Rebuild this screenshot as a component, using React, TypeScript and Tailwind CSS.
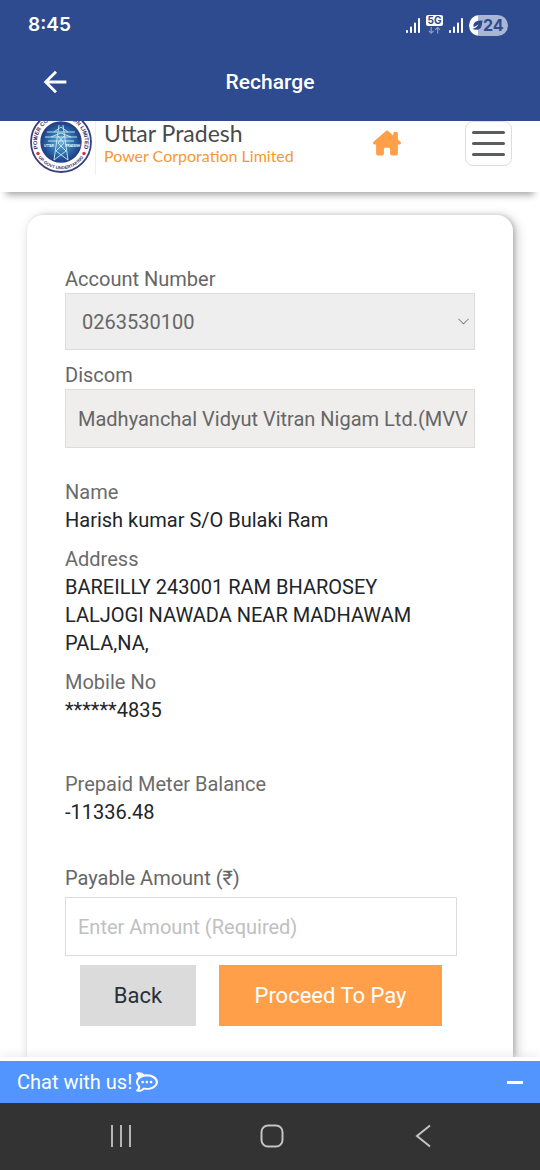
import { useState } from 'react'
import { MdArrowBack } from 'react-icons/md'
import { FaHouseChimney } from 'react-icons/fa6'
import { FaRocketchat } from 'react-icons/fa'
import { BsChevronDown } from 'react-icons/bs'

const CUSTOMER: { label: string; value: string }[] = [
  { label: 'Name', value: 'Harish kumar S/O Bulaki Ram' },
  { label: 'Address', value: 'BAREILLY 243001 RAM BHAROSEY LALJOGI NAWADA NEAR MADHAWAM PALA,NA,' },
  { label: 'Mobile No', value: '******4835' },
]

function Signal() {
  return (
    <svg width="14" height="15" viewBox="0 0 14 15" fill="#fff" aria-hidden="true">
      <rect x="0" y="12" width="2" height="3" rx="0.8" />
      <rect x="4" y="8.5" width="2" height="6.5" rx="0.8" />
      <rect x="8" y="4.5" width="2" height="10.5" rx="0.8" />
      <rect x="12" y="0" width="2" height="15" rx="0.8" />
    </svg>
  )
}

function StatusBar() {
  return (
    <div className="flex h-[50px] items-center justify-between pl-7 pr-8">
      <span className="font-[Inter,sans-serif] text-[19px] font-semibold">8:45</span>
      <div className="flex items-center gap-[6px]">
        <Signal />
        <svg width="17" height="20" viewBox="0 0 17 20" aria-hidden="true">
          <rect width="17" height="11" rx="2" fill="#fff" />
          <text x="8.5" y="9.2" textAnchor="middle" fontFamily="Inter, sans-serif" fontWeight="700" fontSize="10" fill="#2d4b8e">
            5G
          </text>
          <path d="M5.2 12v6M2.8 15.8l2.4 2.4 2.4-2.4M11.6 18.6v-6M9.2 14.8l2.4-2.4 2.4 2.4" fill="none" stroke="#8d9dc4" strokeWidth="1.2" />
        </svg>
        <Signal />
        <div className="flex h-[21px] w-[39px] items-center rounded-full bg-[linear-gradient(90deg,#fff_24%,#aab6d5_24%)] pl-[3px] text-[#2d4b8e]">
          <svg width="11" height="11" viewBox="0 0 11 11" aria-hidden="true">
            <path d="M10.6.8C8 .2 3.600.6 2 3.400 1.200 4.800 1.300 6 1.800 7 3.600 6.600 5.400 5.400 6.800 4 5.600 6.400 3.300 8.300.3 9.100c3.400 1.200 7.200 1 8.800-1.900C10.200 5.200 9.900 2.900 10.600.8z" fill="#2d4b8e" />
          </svg>
          <span className="font-[Inter,sans-serif] text-base font-bold leading-none">24</span>
        </div>
      </div>
    </div>
  )
}

// corporation seal, the top edge slides under the app bar
function Seal() {
  return (
    <svg width="62" height="53" viewBox="0 10 62 53" role="img" aria-label="UPPCL">
      <defs>
        <path id="ring-top" d="M8.800 39.500A23.800 23.800 0 1 1 53.200 39.500" />
        <path id="ring-bottom" d="M7 44A27.300 27.300 0 0 0 55 44" />
        <radialGradient id="seal-sky">
          <stop offset="0" stopColor="#6fb3d6" />
          <stop offset="0.55" stopColor="#2f74b0" />
          <stop offset="1" stopColor="#1c3f86" />
        </radialGradient>
      </defs>
      <circle cx="31" cy="31" r="30" fill="#fff" stroke="#3a3f7d" strokeWidth="1.8" />
      <circle cx="31" cy="31" r="20" fill="url(#seal-sky)" stroke="#2b3f86" strokeWidth="1.4" />
      <text fontFamily="'Liberation Sans', sans-serif" fontWeight="700" fontSize="5.600" fill="#3a3468">
        <textPath href="#ring-top" startOffset="50%" textAnchor="middle">POWER CORPORATION LIMITED</textPath>
      </text>
      <text fontFamily="'Liberation Sans', sans-serif" fontWeight="700" fontSize="4.400" fill="#3a3468">
        <textPath href="#ring-bottom" startOffset="50%" textAnchor="middle">UP GOVT UNDERTAKING</textPath>
      </text>
      <circle cx="8" cy="42.500" r="1.700" fill="#d8313d" />
      <circle cx="54" cy="42.500" r="1.700" fill="#d8313d" />
      <g fill="none" stroke="#cfe9f2" strokeWidth="0.9">
        <path d="M29 14 24 49M33 14l5 35M24 49l12-9M38 49l-12-9M26 40l8-8M36 40l-8-8M28 32l6-7M34 32l-6-7" />
        <path d="M17 21h28M15 26h32M18 30h26M24 21l7-5 7 5M21 26l10-4 10 4" />
      </g>
      <g fontFamily="'Liberation Sans', sans-serif" fontWeight="700" fontSize="3" fill="#fff">
        <text x="14" y="35.500">UTTAR</text>
        <text x="35.500" y="35.500">PRADESH</text>
      </g>
    </svg>
  )
}

function SiteHeader() {
  return (
    <div className="flex h-[71px] items-start bg-white pl-[30px] pr-7 shadow-[0_9px_7px_-6px_rgba(0,0,0,0.35)]">
      <Seal />
      <a href="#" className="ml-[3px] border-l border-[#efefef] pb-2 pl-2 font-[Lato,sans-serif]">
        <span className="block text-[23px] leading-6 text-[#4a4a4a]">Uttar Pradesh</span>
        <span className="block text-base leading-[22px] text-[#f7982f]">Power Corporation Limited</span>
      </a>
      <a href="#" aria-label="Home" className="ml-auto pt-2 text-[#ff9f4a]">
        <FaHouseChimney size={28} />
      </a>
      <button
        type="button"
        aria-label="Menu"
        className="ml-16 flex h-[45px] w-[47px] flex-col items-center justify-center gap-2 rounded-lg border border-[#dcdce2]"
      >
        <span className="h-[3px] w-[33px] rounded-full bg-[#5a5c5e]" />
        <span className="h-[3px] w-[33px] rounded-full bg-[#5a5c5e]" />
        <span className="h-[3px] w-[33px] rounded-full bg-[#5a5c5e]" />
      </button>
    </div>
  )
}

function RechargeForm() {
  const [amount, setAmount] = useState('')

  return (
    <form
      className="mx-[27px] mt-[23px] flex flex-1 flex-col rounded-t-2xl bg-white px-[38px] pb-[31px] pt-[50px] shadow-[3px_2px_12px_rgba(0,0,0,0.24),2px_0_4px_rgba(0,0,0,0.14)]"
      onSubmit={(e) => e.preventDefault()}
    >
      <label htmlFor="account" className="text-[#666]">Account Number</label>
      <div className="relative">
        <select
          id="account"
          className="h-[57px] w-full appearance-none border border-[#dcdcdc] bg-[#eee] pl-4 pr-8 text-[#666]"
        >
          <option>0263530100</option>
        </select>
        <BsChevronDown size={13} className="pointer-events-none absolute right-[5px] top-[22px] text-[#777]" />
      </div>

      <label htmlFor="discom" className="mt-[11px] text-[#666]">Discom</label>
      <input
        id="discom"
        readOnly
        value="Madhyanchal Vidyut Vitran Nigam Ltd.(MVVNL)"
        className="h-[59px] w-full border border-[#dcdcdc] bg-[#efeeec] pl-3 pr-[5px] text-[#666]"
      />

      <dl className="mt-[30px] flex flex-col gap-[11px] pr-[18px]">
        {CUSTOMER.map((item) => (
          <div key={item.label}>
            <dt className="text-[#6b6b6b]">{item.label}</dt>
            <dd className="text-[#212529]">{item.value}</dd>
          </div>
        ))}
      </dl>

      <dl className="mt-[46px]">
        <dt className="text-[#6b6b6b]">Prepaid Meter Balance</dt>
        <dd className="text-[#212529]">-11336.48</dd>
      </dl>

      <label htmlFor="amount" className="mt-[38px] text-[#666]">Payable Amount (₹)</label>
      <div className="mt-[5px] pr-[18px]">
        <input
          id="amount"
          inputMode="decimal"
          placeholder="Enter Amount (Required)"
          value={amount}
          onChange={(e) => setAmount(e.target.value)}
          className="block h-[59px] w-full border border-[#dcdcdc] px-3 text-[#333] placeholder:text-[#c0c0c0]"
        />
      </div>

      <div className="mt-[9px] flex gap-[23px] pl-[15px] pr-[33px] text-[22px]">
        <button type="button" className="h-[61px] w-[116px] bg-[#dbdbdb] text-[#27303b]">Back</button>
        <button type="submit" className="h-[61px] flex-1 bg-[#ff9f4a] text-white">Proceed To Pay</button>
      </div>
    </form>
  )
}

function SystemNav() {
  return (
    <nav className="grid h-[67px] grid-cols-3 place-items-center bg-[#333] pb-0.5 pl-[45px] pr-[42px] text-[#c4c4c4]">
      <button type="button" aria-label="Recent apps">
        <svg width="22" height="22" viewBox="0 0 22 22" stroke="currentColor" strokeWidth="1.800" fill="none">
          <path d="M2 0v22M11 0v22M20 0v22" />
        </svg>
      </button>
      <button type="button" aria-label="Home screen">
        <svg width="24" height="24" viewBox="0 0 24 24" stroke="currentColor" strokeWidth="2" fill="none">
          <rect x="1.500" y="1.500" width="21" height="21" rx="6.500" />
        </svg>
      </button>
      <button type="button" aria-label="Go back">
        <svg width="16" height="24" viewBox="0 0 16 24" stroke="currentColor" strokeWidth="2" fill="none">
          <path d="M15 1.500 2 12l13 10.500" />
        </svg>
      </button>
    </nav>
  )
}

export default function App() {
  return (
    <div className="flex min-h-screen flex-col bg-white font-[Roboto,sans-serif] text-[20px] leading-7">
      <header className="bg-[#2d4b8e] text-white">
        <StatusBar />
        <div className="grid h-[71px] grid-cols-[1fr_auto_1fr] items-center px-[38px] pb-2">
          <button type="button" aria-label="Back">
            <MdArrowBack size={34} />
          </button>
          <h1 className="text-[21px] font-medium">Recharge</h1>
        </div>
      </header>
      <SiteHeader />
      <main className="flex flex-1 flex-col overflow-hidden">
        <RechargeForm />
      </main>
      <footer className="relative bg-white pt-1 shadow-[0_-2px_10px_rgba(0,0,0,0.07)]">
        <div className="flex h-[42px] items-center justify-between bg-[#5295ff] px-[17px] text-white">
          <a href="#" className="flex items-center gap-1">
            Chat with us! <FaRocketchat size={22} />
          </a>
          <button type="button" aria-label="Minimize chat">
            <span className="block h-[3px] w-4 bg-white" />
          </button>
        </div>
        <SystemNav />
      </footer>
    </div>
  )
}
